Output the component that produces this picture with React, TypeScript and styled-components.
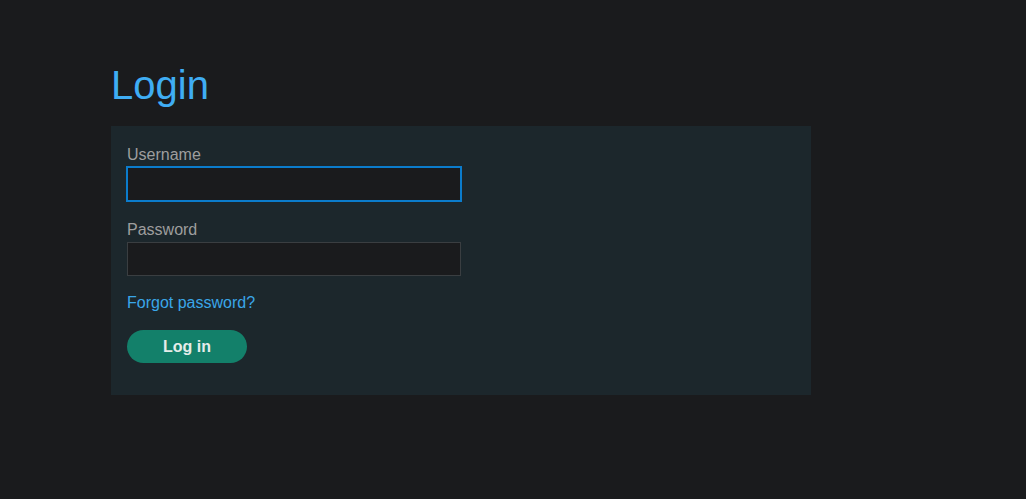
import React from "react";
import styled, { createGlobalStyle } from "styled-components";

const Global = createGlobalStyle`
  html, body { margin: 0; padding: 0; background: #1a1b1d; }
  body { font-family: "Liberation Sans", Arial, sans-serif; }
  * { box-sizing: border-box; }
`;

const Page = styled.main`
  padding: 62px 0 0 111px;
  min-height: 499px;
`;

const Title = styled.h1`
  margin: 0 0 18px;
  font-size: 40px;
  font-weight: 400;
  line-height: 46px;
  color: #3fadf4;
`;

const Panel = styled.form`
  width: 700px;
  background: #1c272c;
  padding: 20px 16px 32px;
  display: flex;
  flex-direction: column;
`;

const Label = styled.label`
  font-size: 16px;
  line-height: 18px;
  color: #9e9e9e;
  margin-bottom: 3px;
`;

const Input = styled.input<{ $focused?: boolean }>`
  width: 334px;
  height: 34px;
  background: #1a1b1d;
  border: 1px solid ${(p) => (p.$focused ? "#0b7ccc" : "#3a3e41")};
  outline: ${(p) => (p.$focused ? "1px solid #0b7ccc" : "none")};
  color: #ddd;
  font-size: 16px;
  padding: 0 8px;
  margin-bottom: 20px;
  &:last-of-type { margin-bottom: 18px; }
`;

const Link = styled.a`
  font-size: 16px;
  line-height: 18px;
  color: #3aa6e8;
  text-decoration: none;
  margin-bottom: 18px;
  align-self: flex-start;
`;

const Button = styled.button`
  width: 120px;
  height: 33px;
  border: none;
  border-radius: 17px;
  background: #13806a;
  color: #e6ece9;
  font-family: "Liberation Sans", Arial, sans-serif;
  font-weight: 700;
  font-size: 16px;
  cursor: pointer;
`;

export default function App() {
  return (
    <>
      <Global />
      <Page>
        <Title>Login</Title>
        <Panel onSubmit={(e) => e.preventDefault()}>
          <Label htmlFor="u">Username</Label>
          <Input id="u" $focused />
          <Label htmlFor="p">Password</Label>
          <Input id="p" type="password" />
          <Link href="#">Forgot password?</Link>
          <Button type="submit">Log in</Button>
        </Panel>
      </Page>
    </>
  );
}
